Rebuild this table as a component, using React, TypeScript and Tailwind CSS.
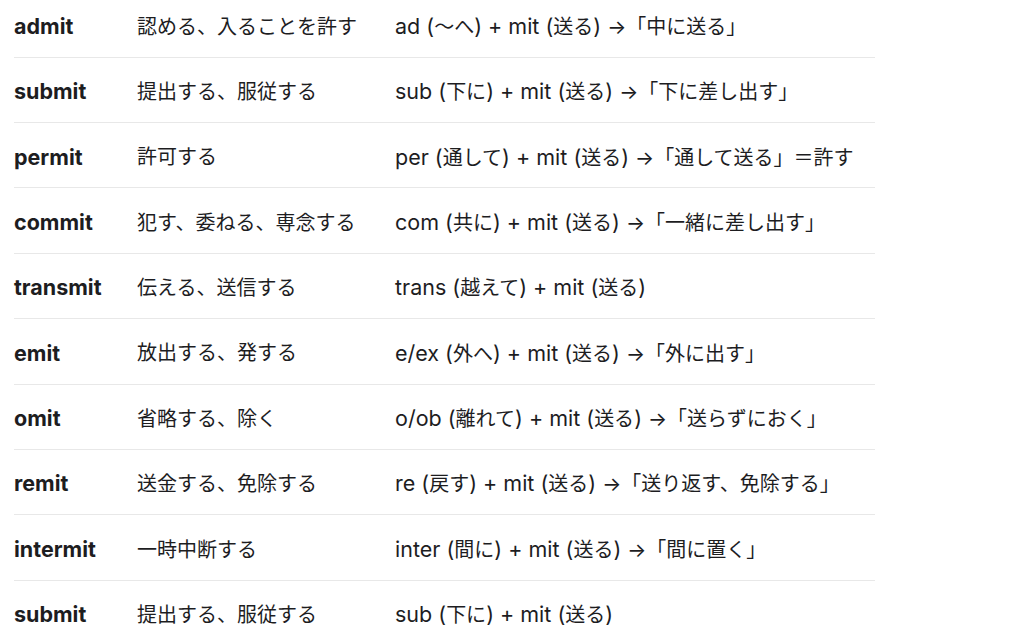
const rows: [string, string, string][] = [
  ["admit", "認める、入ることを許す", "ad (〜へ) + mit (送る) →「中に送る」"],
  ["submit", "提出する、服従する", "sub (下に) + mit (送る) →「下に差し出す」"],
  ["permit", "許可する", "per (通して) + mit (送る) →「通して送る」＝許す"],
  ["commit", "犯す、委ねる、専念する", "com (共に) + mit (送る) →「一緒に差し出す」"],
  ["transmit", "伝える、送信する", "trans (越えて) + mit (送る)"],
  ["emit", "放出する、発する", "e/ex (外へ) + mit (送る) →「外に出す」"],
  ["omit", "省略する、除く", "o/ob (離れて) + mit (送る) →「送らずにおく」"],
  ["remit", "送金する、免除する", "re (戻す) + mit (送る) →「送り返す、免除する」"],
  ["intermit", "一時中断する", "inter (間に) + mit (送る) →「間に置く」"],
  ["submit", "提出する、服従する", "sub (下に) + mit (送る)"],
]

// latin runs are set a bit larger so they sit like the system font next to the kana
function Origin({ text }: { text: string }) {
  const parts = text.split(/([A-Za-z/+() ]+)/).filter(Boolean)
  return (
    <div className="whitespace-nowrap">
      {parts.map((p, i) =>
        /^[A-Za-z/+() ]+$/.test(p) ? (
          <span key={i} className="text-[21.5px]">
            {p}
          </span>
        ) : (
          <span key={i}>{p}</span>
        )
      )}
    </div>
  )
}

export default function App() {
  return (
    <div
      className="h-[636px] w-[1024px] overflow-hidden bg-white text-[#1d1d1f]"
      style={{ fontFamily: '"Inter", "Noto Sans CJK JP", sans-serif' }}
    >
      <div className="-mt-[7.7px] ml-[14px] w-[861px]">
        {rows.map(([word, meaning, origin], i) => (
          <div
            key={i}
            className="grid h-[65.375px] grid-cols-[123px_258px_1fr] items-center border-b border-[#e8e8e8] pt-[4px] text-[20px] leading-none"
          >
            <div className="text-[21.5px] font-bold">{word}</div>
            <div>{meaning}</div>
            <Origin text={origin} />
          </div>
        ))}
      </div>
    </div>
  )
}
